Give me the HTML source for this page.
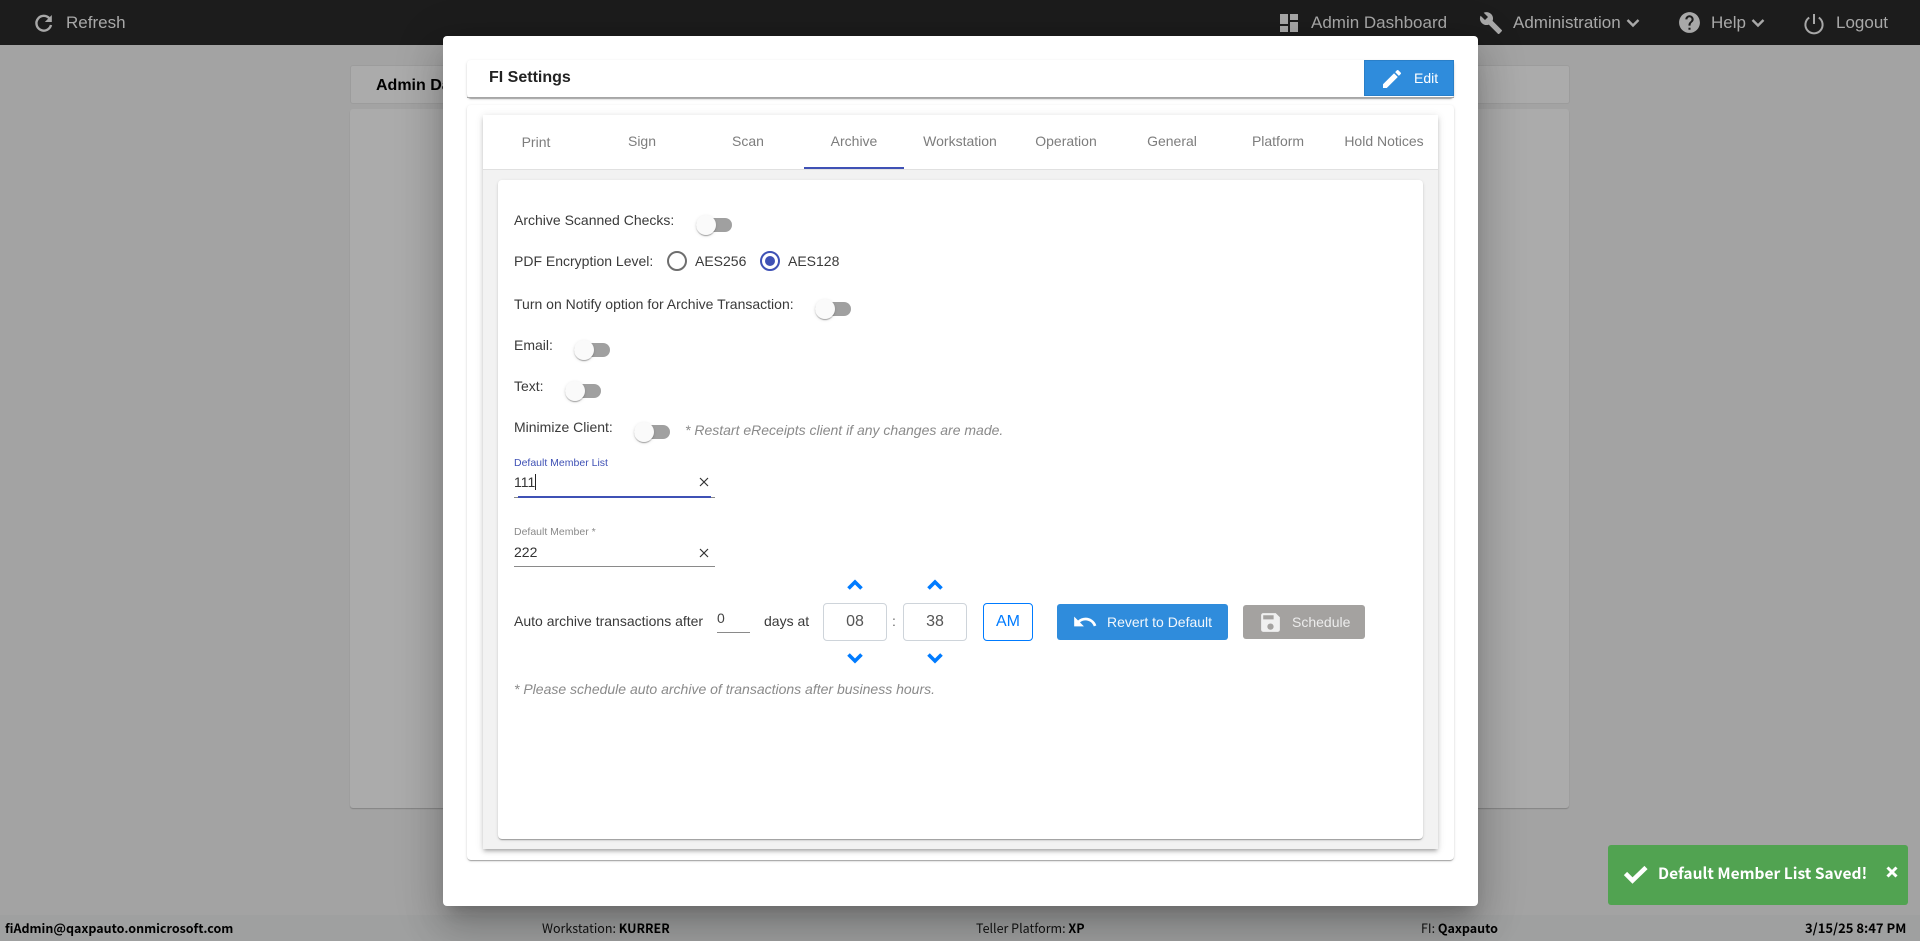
<!DOCTYPE html>
<html><head><meta charset="utf-8"><title>FI Settings</title>
<style>
html,body{margin:0;padding:0;width:1920px;height:941px;overflow:hidden;background:#a3a3a3;font-family:"Liberation Sans",Arial,sans-serif;font-size:14px;color:#333}
.a{position:absolute}
.t{position:absolute;white-space:nowrap;line-height:20px;height:20px}
.nav{color:#a8a8a8;font-size:17px}
.tab{color:#7d7d7d;width:106px;text-align:center;top:131px}
.lab{color:#3a3a3a;left:514px}
.tg{position:absolute;width:36px;height:20px}
.tg i{position:absolute;left:0;top:3px;width:36px;height:14px;border-radius:7px;background:#a0a0a0}
.tg b{position:absolute;left:0;top:0;width:20px;height:20px;border-radius:50%;background:#fafafa;box-shadow:0 2px 1px -1px rgba(0,0,0,.2),0 1px 1px rgba(0,0,0,.14),0 1px 3px rgba(0,0,0,.12)}
.it{font-style:italic;color:#8a8a8a}
.box{position:absolute;box-sizing:border-box;height:38px;top:603px;border:1px solid #ced4da;border-radius:4px;background:#fff;color:#555;font-size:16px;line-height:36px;text-align:center}
.foot{font-family:"Noto Sans CJK JP","Liberation Sans",sans-serif;font-size:12.5px;color:#111;top:918px}
.foot b{color:#000}
svg{position:absolute;display:block}
</style></head><body>
<!-- background page -->
<div class="a" style="left:0;top:0;width:1920px;height:45px;background:#1c1c1c"></div>
<div class="a" style="left:350px;top:65px;width:1218px;height:37px;background:#ababab;border:1px solid #9c9c9c;border-radius:3px"></div>
<div class="t" style="left:376px;top:76px;font-size:16px;font-weight:bold;color:#000">Admin Dashboard</div>
<div class="a" style="left:350px;top:109px;width:1219px;height:699px;background:#ababab;border-radius:3px;box-shadow:0 1px 1px rgba(0,0,0,.2)"></div>
<div class="a" style="left:0;top:915px;width:1920px;height:26px;background:#9fa0a0"></div>

<!-- nav -->
<svg style="left:34px;top:13px" width="20" height="20" viewBox="0 0 20 20"><path d="M15.6 5.6A7.4 7.4 0 1 0 17 12" fill="none" stroke="#a8a8a8" stroke-width="2.4"/><path d="M17.8 2v7h-7z" fill="#a8a8a8"/></svg>
<div class="t nav" style="left:66px;top:13px">Refresh</div>
<svg style="left:1277px;top:11px" width="24" height="24" viewBox="0 0 24 24"><path fill="#a8a8a8" d="M3 13h8V3H3v10zm0 8h8v-6H3v6zm10 0h8V11h-8v10zm0-18v6h8V3h-8z"/></svg>
<div class="t nav" style="left:1311px;top:13px">Admin Dashboard</div>
<svg style="left:1479px;top:11px" width="24" height="24" viewBox="0 0 24 24"><path fill="#a8a8a8" d="M22.7 19l-9.1-9.1c.9-2.3.4-5-1.5-6.9-2-2-5-2.4-7.4-1.3L9 6 6 9 1.6 4.7C.4 7.1.9 10.1 2.9 12.1c1.9 1.9 4.6 2.4 6.9 1.5l9.1 9.1c.4.4 1 .4 1.4 0l2.3-2.3c.5-.4.5-1.1.1-1.4z"/></svg>
<div class="t nav" style="left:1513px;top:13px">Administration</div>
<svg style="left:1626px;top:18px" width="14" height="10" viewBox="0 0 14 10"><path d="M1.5 2l5.5 5.5L12.5 2" fill="none" stroke="#a8a8a8" stroke-width="2.4"/></svg>
<svg style="left:1677px;top:10px" width="25" height="25" viewBox="0 0 24 24"><path fill="#a8a8a8" d="M12 2C6.48 2 2 6.48 2 12s4.48 10 10 10 10-4.48 10-10S17.52 2 12 2zm1 17h-2v-2h2v2zm2.07-7.75l-.9.92C13.45 12.9 13 13.5 13 15h-2v-.5c0-1.1.45-2.1 1.17-2.83l1.24-1.26c.37-.36.59-.86.59-1.41 0-1.1-.9-2-2-2s-2 .9-2 2H8c0-2.21 1.79-4 4-4s4 1.79 4 4c0 .88-.36 1.68-.93 2.25z"/></svg>
<div class="t nav" style="left:1711px;top:13px">Help</div>
<svg style="left:1751px;top:18px" width="14" height="10" viewBox="0 0 14 10"><path d="M1.5 2l5.5 5.5L12.5 2" fill="none" stroke="#a8a8a8" stroke-width="2.4"/></svg>
<svg style="left:1802px;top:11px" width="24" height="24" viewBox="0 0 24 24"><path d="M7.2 6.6A8.6 8.6 0 1 0 16.8 6.6" fill="none" stroke="#a8a8a8" stroke-width="2"/><path d="M12 3v10" fill="none" stroke="#a8a8a8" stroke-width="2"/></svg>
<div class="t nav" style="left:1836px;top:13px">Logout</div>

<!-- footer -->
<div class="t foot" style="left:5px;font-weight:bold;color:#000">fiAdmin@qaxpauto.onmicrosoft.com</div>
<div class="t foot" style="left:542px">Workstation: <b>KURRER</b></div>
<div class="t foot" style="left:976px">Teller Platform: <b>XP</b></div>
<div class="t foot" style="left:1421px">FI: <b>Qaxpauto</b></div>
<div class="t foot" style="left:1805px;font-size:13px;font-weight:bold;color:#000">3/15/25 8:47 PM</div>

<!-- modal -->
<div class="a" style="left:443px;top:36px;width:1035px;height:870px;background:#fff;border-radius:4px;box-shadow:0 11px 15px -7px rgba(0,0,0,.2),0 24px 38px 3px rgba(0,0,0,.14),0 9px 46px 8px rgba(0,0,0,.12)"></div>
<div class="a" style="left:467px;top:60px;width:987px;height:38px;background:#fff;border-radius:4px;box-shadow:0 2px 1px -1px rgba(0,0,0,.2),0 1px 1px rgba(0,0,0,.14),0 1px 3px rgba(0,0,0,.12);border-bottom:0"></div>
<div class="a" style="left:467px;top:97px;width:987px;height:1px;background:#a6a6a6"></div>
<div class="t" style="left:489px;top:68px;font-size:16px;font-weight:bold;color:#222">FI Settings</div>
<div class="a" style="left:1364px;top:60px;width:90px;height:36px;background:#2f8cdc;border:1px solid #2a7fc8;box-sizing:border-box"></div>
<svg style="left:1380px;top:67px" width="24" height="24" viewBox="0 0 24 24"><path fill="#fff" d="M3 17.25V21h3.75L17.81 9.94l-3.75-3.75L3 17.25zM20.71 7.04c.39-.39.39-1.02 0-1.41l-2.34-2.34c-.39-.39-1.02-.39-1.41 0l-1.83 1.83 3.75 3.75 1.83-1.83z"/></svg>
<div class="t" style="left:1414px;top:68px;color:#fff;font-size:14px">Edit</div>

<div class="a" style="left:467px;top:105px;width:987px;height:755px;background:#fff;border-radius:4px;box-shadow:0 2px 1px -1px rgba(0,0,0,.2),0 1px 1px rgba(0,0,0,.14),0 1px 3px rgba(0,0,0,.12)"></div>
<div class="a" style="left:483px;top:115px;width:955px;height:734px;background:#fff;box-shadow:0 3px 3px -2px rgba(0,0,0,.2),0 3px 4px rgba(0,0,0,.14),0 1px 8px rgba(0,0,0,.12)"></div>
<div class="a" style="left:483px;top:169px;width:955px;height:680px;background:#f2f2f2;border-top:1px solid #e0e0e0;box-sizing:border-box"></div>
<div class="a" style="left:498px;top:180px;width:925px;height:659px;background:#fff;border-radius:4px;box-shadow:0 2px 1px -1px rgba(0,0,0,.2),0 1px 1px rgba(0,0,0,.14),0 1px 3px rgba(0,0,0,.12)"></div>

<div class="t tab" style="left:483px;top:132px">Print</div>
<div class="t tab" style="left:589px">Sign</div>
<div class="t tab" style="left:695px">Scan</div>
<div class="t tab" style="left:801px">Archive</div>
<div class="t tab" style="left:907px">Workstation</div>
<div class="t tab" style="left:1013px">Operation</div>
<div class="t tab" style="left:1119px">General</div>
<div class="t tab" style="left:1225px">Platform</div>
<div class="t tab" style="left:1331px">Hold Notices</div>
<div class="a" style="left:804px;top:167px;width:100px;height:2px;background:#3f51b5"></div>

<div class="t lab" style="top:210px">Archive Scanned Checks:</div>
<div class="tg" style="left:696px;top:215px"><i></i><b></b></div>
<div class="t lab" style="top:251px">PDF Encryption Level:</div>
<div class="a" style="left:667px;top:251px;width:20px;height:20px;box-sizing:border-box;border:2px solid #6e6e6e;border-radius:50%"></div>
<div class="t" style="left:695px;top:251px;color:#3a3a3a">AES256</div>
<div class="a" style="left:760px;top:251px;width:20px;height:20px;box-sizing:border-box;border:2px solid #3f51b5;border-radius:50%"></div>
<div class="a" style="left:765px;top:256px;width:10px;height:10px;background:#3f51b5;border-radius:50%"></div>
<div class="t" style="left:788px;top:251px;color:#3a3a3a">AES128</div>
<div class="t lab" style="top:294px">Turn on Notify option for Archive Transaction:</div>
<div class="tg" style="left:815px;top:299px"><i></i><b></b></div>
<div class="t lab" style="top:335px">Email:</div>
<div class="tg" style="left:574px;top:340px"><i></i><b></b></div>
<div class="t lab" style="top:376px">Text:</div>
<div class="tg" style="left:565px;top:381px"><i></i><b></b></div>
<div class="t lab" style="top:417px">Minimize Client:</div>
<div class="tg" style="left:634px;top:422px"><i></i><b></b></div>
<div class="t it" style="left:685px;top:420px">* Restart eReceipts client if any changes are made.</div>

<div class="t" style="left:514px;top:453px;font-size:10.5px;color:#3f51b5">Default Member List</div>
<div class="t" style="left:514px;top:472px;color:#333">111</div>
<div class="a" style="left:535px;top:474px;width:1px;height:16px;background:#222"></div>
<svg style="left:699px;top:477px" width="10" height="10" viewBox="0 0 10 10"><path d="M1 1l8 8M9 1l-8 8" stroke="#333" stroke-width="1.2" fill="none"/></svg>
<div class="a" style="left:514px;top:497px;width:201px;height:1px;background:#8a8a8a"></div>
<div class="a" style="left:518px;top:496px;width:193px;height:2px;background:#3f51b5"></div>

<div class="t" style="left:514px;top:522px;font-size:10.5px;color:#8a8a8a">Default Member *</div>
<div class="t" style="left:514px;top:542px;color:#333">222</div>
<svg style="left:699px;top:548px" width="10" height="10" viewBox="0 0 10 10"><path d="M1 1l8 8M9 1l-8 8" stroke="#333" stroke-width="1.2" fill="none"/></svg>
<div class="a" style="left:514px;top:566px;width:201px;height:1px;background:#8a8a8a"></div>

<div class="t" style="left:514px;top:611px;color:#3a3a3a">Auto archive transactions after</div>
<div class="t" style="left:717px;top:608px;font-size:14px;color:#444">0</div>
<div class="a" style="left:717px;top:632px;width:33px;height:1px;background:#8a8a8a"></div>
<div class="t" style="left:764px;top:611px;color:#3a3a3a">days at</div>

<svg style="left:847px;top:579px" width="16" height="12" viewBox="0 0 16 12"><path d="M1.5 9.5L8 3l6.5 6.5" fill="none" stroke="#007bff" stroke-width="3.6"/></svg>
<svg style="left:927px;top:579px" width="16" height="12" viewBox="0 0 16 12"><path d="M1.5 9.5L8 3l6.5 6.5" fill="none" stroke="#007bff" stroke-width="3.6"/></svg>
<svg style="left:847px;top:652px" width="16" height="12" viewBox="0 0 16 12"><path d="M1.5 2.5L8 9l6.5-6.5" fill="none" stroke="#007bff" stroke-width="3.6"/></svg>
<svg style="left:927px;top:652px" width="16" height="12" viewBox="0 0 16 12"><path d="M1.5 2.5L8 9l6.5-6.5" fill="none" stroke="#007bff" stroke-width="3.6"/></svg>
<div class="box" style="left:823px;width:64px">08</div>
<div class="t" style="left:892px;top:611px;color:#666">:</div>
<div class="box" style="left:903px;width:64px">38</div>
<div class="box" style="left:983px;width:50px;border-color:#007bff;color:#007bff">AM</div>

<div class="a" style="left:1057px;top:604px;width:171px;height:36px;background:#2f8cdc;border-radius:3px"></div>
<svg style="left:1072px;top:609px" width="26" height="26" viewBox="0 0 24 24"><path fill="#fff" d="M12.5 8c-2.65 0-5.05.99-6.9 2.6L2 7v9h9l-3.62-3.62c1.39-1.16 3.16-1.88 5.12-1.88 3.54 0 6.55 2.31 7.6 5.5l2.37-.78C21.08 11.03 17.15 8 12.5 8z"/></svg>
<div class="t" style="left:1107px;top:612px;color:#f2f7fc">Revert to Default</div>
<div class="a" style="left:1243px;top:605px;width:122px;height:34px;background:#a4a2a0;border-radius:3px"></div>
<svg style="left:1258px;top:610px" width="25" height="25" viewBox="0 0 24 24"><path fill="#f0f0f0" d="M17 3H5c-1.11 0-2 .9-2 2v14c0 1.1.89 2 2 2h14c1.1 0 2-.9 2-2V7l-4-4zm-5 16c-1.66 0-3-1.34-3-3s1.34-3 3-3 3 1.34 3 3-1.34 3-3 3zm3-10H5V5h10v4z"/></svg>
<div class="t" style="left:1292px;top:612px;color:#ececec">Schedule</div>

<div class="t it" style="left:514px;top:679px">* Please schedule auto archive of transactions after business hours.</div>

<!-- toast -->
<div class="a" style="left:1608px;top:845px;width:300px;height:60px;background:#51a351;border-radius:3px"></div>
<svg style="left:1620px;top:862px" width="30" height="24" viewBox="0 0 30 24"><path d="M5.5 11.5l7 7L26 5.5" fill="none" stroke="#fff" stroke-width="4.6"/></svg>
<div class="t" style="left:1658px;top:863px;font-family:'Noto Sans CJK JP','Liberation Sans',sans-serif;font-weight:bold;font-size:15.5px;color:#fff">Default Member List Saved!</div>
<svg style="left:1886px;top:866px" width="12" height="12" viewBox="0 0 12 12"><path d="M1.5 1.5l9 9M10.5 1.5l-9 9" fill="none" stroke="#fff" stroke-width="3"/></svg>
</body></html>
